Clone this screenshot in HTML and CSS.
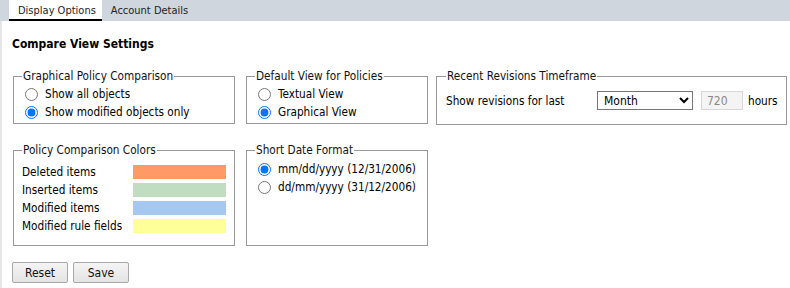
FILE: index.html
```html
<!DOCTYPE html>
<html lang="en">
<head>
    <meta charset="UTF-8">
    <title>Display Options</title>
    <link rel="stylesheet" href="styles.css">
</head>
<body>
    <div class="tabs">
        <div class="tab active">Display Options</div>
        <div class="tab">Account Details</div>
    </div>

    <div class="content">
        <h2>Compare View Settings</h2>

        <div class="row">
            <fieldset class="box col1 short">
                <legend>Graphical Policy Comparison</legend>
                <label class="opt"><input type="radio" name="gpc">Show all objects</label>
                <label class="opt"><input type="radio" name="gpc" checked>Show modified objects only</label>
            </fieldset>

            <fieldset class="box col2 short">
                <legend>Default View for Policies</legend>
                <label class="opt"><input type="radio" name="dv">Textual View</label>
                <label class="opt"><input type="radio" name="dv" checked>Graphical View</label>
            </fieldset>

            <fieldset class="box col3 revisions">
                <legend>Recent Revisions Timeframe</legend>
                <div class="rev-row">
                    <span class="rev-label">Show revisions for last</span>
                    <select class="period">
                        <option>Month</option>
                        <option>Week</option>
                        <option>Day</option>
                    </select>
                    <input type="text" class="hours" value="720" disabled>
                    <span>hours</span>
                </div>
            </fieldset>
        </div>

        <div class="row last">
            <fieldset class="box col1 tall">
                <legend>Policy Comparison Colors</legend>
                <div class="color-row"><span>Deleted items</span><span class="swatch deleted"></span></div>
                <div class="color-row"><span>Inserted items</span><span class="swatch inserted"></span></div>
                <div class="color-row"><span>Modified items</span><span class="swatch modified"></span></div>
                <div class="color-row"><span>Modified rule fields</span><span class="swatch fields"></span></div>
            </fieldset>

            <fieldset class="box col2 tall">
                <legend>Short Date Format</legend>
                <label class="opt"><input type="radio" name="df" checked>mm/dd/yyyy (12/31/2006)</label>
                <label class="opt"><input type="radio" name="df">dd/mm/yyyy (31/12/2006)</label>
            </fieldset>
        </div>

        <div class="buttons">
            <button class="btn">Reset</button>
            <button class="btn">Save</button>
        </div>
    </div>
</body>
</html>
```
FILE: styles.css
```css
body {
    margin: 0;
    font-family: "DejaVu Sans Condensed", "DejaVu Sans", sans-serif;
    font-size: 11.7px;
    color: #000;
    background: #fff;
}

.tabs {
    display: flex;
    height: 21px;
    background: #cfd6dd;
    padding-left: 9px;
    font-size: 11px;
}

.tab {
    padding: 4px 6px 0 9px;
    color: #222;
    white-space: nowrap;
}

.active {
    background: #fff;
    border-bottom: 2px solid #000;
    height: 15px;
}

.content {
    border-left: 2px solid #e6e6e6;
    padding: 13px 0 0 10px;
    min-height: 267px;
    box-sizing: border-box;
}

h2 {
    font-size: 12px;
    font-weight: bold;
    margin: 3px 0 18px 0;
}

.row {
    display: flex;
    align-items: flex-start;
    margin-bottom: 18px;
}

.row.last {
    margin-bottom: 16px;
}

.box {
    margin: 0;
    border: 1px solid #999;
    padding: 2px 8px 0 8px;
    box-sizing: border-box;
    white-space: nowrap;
}

.box legend {
    padding: 0 1px;
    color: #111;
}

.short {
    padding-bottom: 2px;
}

.col1 {
    width: 222px;
    margin-left: 1px;
    margin-right: 11px;
}

.col2 {
    width: 182px;
    margin-right: 8px;
}

.col3 {
    width: 348px;
}

.tall {
    height: 103px;
    padding-top: 3px;
}

.opt {
    display: flex;
    align-items: center;
    height: 18px;
}

.opt input {
    margin: 0 7px 0 3px;
    width: 13px;
    height: 13px;
}

.revisions {
    padding: 8px 8px 14px 9px;
}

.rev-row {
    display: flex;
    align-items: center;
    height: 19px;
}

.rev-label {
    width: 151px;
}

.period {
    width: 96px;
    height: 19px;
    font-family: inherit;
    font-size: 12px;
    border: 1px solid #767676;
    border-radius: 0;
    background: #fff;
    padding: 0 2px;
    margin-right: 8px;
}

.hours {
    width: 42px;
    height: 19px;
    box-sizing: border-box;
    font-family: inherit;
    font-size: 12px;
    color: #888;
    background: #f4f4f4;
    border: 1px solid #d8d8d8;
    padding: 0 4px 0 5px;
    margin-right: 5px;
}

.color-row {
    display: flex;
    align-items: center;
    justify-content: space-between;
    height: 18px;
}

.color-row:first-of-type {
    margin-top: 3px;
}

.swatch {
    width: 93px;
    height: 14px;
}

.deleted { background: #ff9966; }
.inserted { background: #c1ddc1; }
.modified { background: #a6c8f0; }
.fields { background: #ffff99; }

.buttons {
    display: flex;
    gap: 5px;
}

.btn {
    width: 56px;
    height: 21px;
    font-family: inherit;
    font-size: 12px;
    border: 1px solid #a8a8a8;
    border-radius: 2px;
    background: linear-gradient(#f4f4f4, #e4e4e4);
    padding: 0;
    color: #111;
}
```
